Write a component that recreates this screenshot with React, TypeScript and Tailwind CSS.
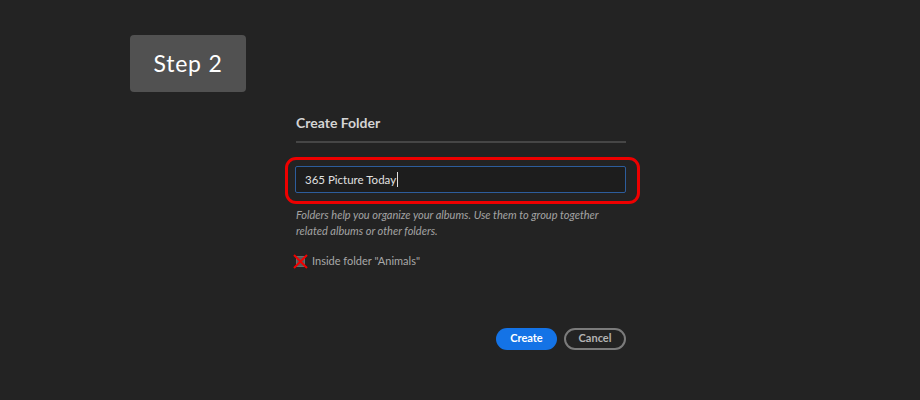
export default function App() {
  return (
    <div className="w-[920px] h-[400px] bg-[#232323] overflow-hidden font-['Lato',sans-serif]">
      <div className="pt-[35px] pl-[130px]">
        <div className="w-[116px] h-[57px] rounded-[4px] bg-[#515151] flex items-center justify-center">
          <span className="text-[23px] text-white tracking-[0.8px] font-['Lato',sans-serif]">Step 2</span>
        </div>
      </div>

      <div className="ml-[296px] w-[330px] mt-[21px]">
        <h2 className="text-[14px] font-bold text-[#d4d4d4] leading-[20px]">Create Folder</h2>
        <div className="mt-[8px] h-[2px] bg-[#464646]" />

        <div className="relative mt-[23px] -ml-px">
          <div className="absolute -left-[10px] -right-[14px] -top-[9px] -bottom-[11px] border-[3px] border-[#ee0000] rounded-[11px] pointer-events-none" />
          <div className="h-[27px] w-[331px] border border-[#2d5d9c] rounded-[2px] bg-[#1d1d1d] flex items-center pl-[9px]">
            <span className="text-[11.5px] text-[#e0e0e0]">365 Picture Today</span>
            <span className="ml-px w-px h-[15px] bg-[#e0e0e0]" />
          </div>
        </div>

        <p className="mt-[14px] text-[11px] italic text-[#a3a3a3] leading-[16px]">
          Folders help you organize your albums. Use them to group together
          <br />
          related albums or other folders.
        </p>

        <div className="mt-[14px] flex items-center">
          <div className="relative w-[11px] h-[13px] ml-[-1px]">
            <div className="absolute inset-x-[1px] inset-y-[1px] bg-[#5a5a5a] border border-[#6a6a6a]" />
            <svg className="absolute -left-[2px] -top-[1px]" width="15" height="15" viewBox="0 0 15 15">
              <path d="M1 1 L14 14 M14 1 L1 14" stroke="#f00000" strokeWidth="2" fill="none" />
            </svg>
          </div>
          <span className="ml-[6px] text-[11px] text-[#a8a8a8]">Inside folder "Animals"</span>
        </div>

        <div className="mt-[58px] flex justify-end gap-[7px]">
          <button className="w-[61px] h-[22px] rounded-full bg-[#1473e6] text-white text-[11px] font-bold">Create</button>
          <button className="w-[62px] h-[22px] rounded-full border-2 border-[#7b7b7b] text-[#b3b3b3] text-[11px] font-bold">Cancel</button>
        </div>
      </div>
    </div>
  );
}
